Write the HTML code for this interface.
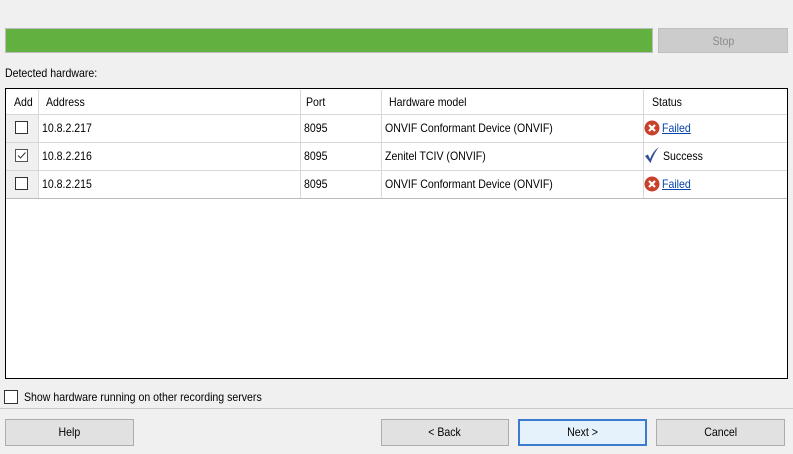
<!DOCTYPE html>
<html><head><style>
body{margin:0;width:793px;height:454px;background:#f0f0f0;font-family:"Liberation Sans",sans-serif;font-size:12px;color:#000;position:relative;overflow:hidden}
.a{position:absolute}
.t{display:inline-block;transform:scaleX(.88);transform-origin:left center;white-space:nowrap}
.btn .t{transform-origin:center center}
.btn{position:absolute;background:#e1e1e1;border:1px solid #adadad;box-sizing:border-box;text-align:center;line-height:25px}
.cell{position:absolute;line-height:28px;white-space:nowrap}
.vl{position:absolute;top:90px;height:108px;width:1px;background:#d8d8d8}
.hl{position:absolute;left:6px;width:781px;height:1px;background:#d8d8d8}
.cb{position:absolute;width:13px;height:13px;border:1px solid #333;box-sizing:border-box;background:#fff}
a{color:#0645ad;text-decoration:underline}
</style></head><body>
<div class="a" style="left:5px;top:28px;width:648px;height:25px;background:#62b140;border:1px solid #bcbcbc;box-sizing:border-box"></div>
<div class="btn" style="left:658px;top:28px;width:130px;height:25px;background:#cccccc;border-color:#bfbfbf;color:#8a8a8a"><span class="t">Stop</span></div>
<div class="a" style="left:5px;top:66px"><span class="t">Detected hardware:</span></div>
<div class="a" style="left:5px;top:88px;width:783px;height:291px;background:#fff;border:1px solid #000;box-sizing:border-box"></div>
<div class="a" style="left:6px;top:115px;width:32px;height:83px;background:#f0f0f0"></div>
<div class="hl" style="top:114px"></div>
<div class="hl" style="top:142px"></div>
<div class="hl" style="top:170px"></div>
<div class="hl" style="top:198px;background:#bbb"></div>
<div class="vl" style="left:38px"></div>
<div class="vl" style="left:300px"></div>
<div class="vl" style="left:381px"></div>
<div class="vl" style="left:643px"></div>
<div class="cell" style="left:14px;top:88px"><span class="t">Add</span></div>
<div class="cell" style="left:46px;top:88px"><span class="t">Address</span></div>
<div class="cell" style="left:306px;top:88px"><span class="t">Port</span></div>
<div class="cell" style="left:389px;top:88px"><span class="t">Hardware model</span></div>
<div class="cell" style="left:652px;top:88px"><span class="t">Status</span></div>
<div class="cb" style="left:15px;top:121px"></div>
<div class="cb" style="left:15px;top:149px;border-color:#555"><svg width="11" height="11" style="position:absolute;left:0;top:0"><path d="M2 5.5 L4.5 8 L9.5 2.5" stroke="#333" stroke-width="1" fill="none"/></svg></div>
<div class="cb" style="left:15px;top:177px"></div>
<div class="cell" style="left:42px;top:114px"><span class="t">10.8.2.217</span></div>
<div class="cell" style="left:42px;top:142px"><span class="t">10.8.2.216</span></div>
<div class="cell" style="left:42px;top:170px"><span class="t">10.8.2.215</span></div>
<div class="cell" style="left:304px;top:114px"><span class="t">8095</span></div>
<div class="cell" style="left:304px;top:142px"><span class="t">8095</span></div>
<div class="cell" style="left:304px;top:170px"><span class="t">8095</span></div>
<div class="cell" style="left:385px;top:114px"><span class="t">ONVIF Conformant Device (ONVIF)</span></div>
<div class="cell" style="left:385px;top:142px"><span class="t">Zenitel TCIV (ONVIF)</span></div>
<div class="cell" style="left:385px;top:170px"><span class="t">ONVIF Conformant Device (ONVIF)</span></div>
<svg class="a" style="left:644px;top:120px" width="16" height="16"><circle cx="8" cy="8" r="7.5" fill="#c9412a"/><path d="M5 5L11 11M11 5L5 11" stroke="#fff" stroke-width="2.2"/></svg>
<div class="cell" style="left:662px;top:114px"><span class="t"><a>Failed</a></span></div>
<svg class="a" style="left:644px;top:146px" width="16" height="18"><path d="M1 10 L4 8.5 L6 13 Q9 5 15 1 Q10 7 6.5 17 Z" fill="#2f4d95"/></svg>
<div class="cell" style="left:663px;top:142px"><span class="t">Success</span></div>
<svg class="a" style="left:644px;top:176px" width="16" height="16"><circle cx="8" cy="8" r="7.5" fill="#c9412a"/><path d="M5 5L11 11M11 5L5 11" stroke="#fff" stroke-width="2.2"/></svg>
<div class="cell" style="left:662px;top:170px"><span class="t"><a>Failed</a></span></div>
<div class="cb" style="left:4px;top:390px;width:14px;height:14px"></div>
<div class="a" style="left:24px;top:390px"><span class="t">Show hardware running on other recording servers</span></div>
<div class="a" style="left:0;top:408px;width:793px;height:1px;background:#c8c8c8"></div>
<div class="btn" style="left:5px;top:419px;width:129px;height:27px"><span class="t">Help</span></div>
<div class="btn" style="left:381px;top:419px;width:128px;height:27px"><span class="t">&lt; Back</span></div>
<div class="btn" style="left:518px;top:419px;width:129px;height:27px;border:2px solid #3d7bd1;background:#e5f1fb;line-height:23px"><span class="t">Next &gt;</span></div>
<div class="btn" style="left:656px;top:419px;width:129px;height:27px"><span class="t">Cancel</span></div>
</body></html>
